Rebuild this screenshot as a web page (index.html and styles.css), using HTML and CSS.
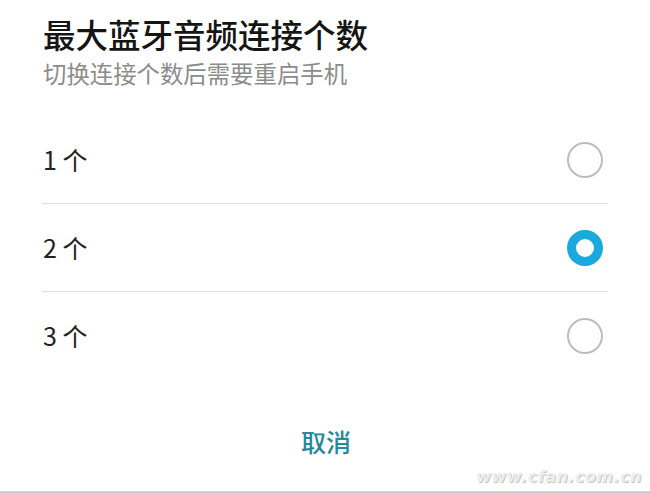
FILE: index.html
```html
<!DOCTYPE html>
<html lang="zh-CN">
<head>
<meta charset="utf-8">
<title>最大蓝牙音频连接个数</title>
<link rel="stylesheet" href="styles.css">
</head>
<body>
<div class="dialog">
  <div class="header">
    <div class="title">最大蓝牙音频连接个数</div>
    <div class="subtitle">切换连接个数后需要重启手机</div>
  </div>
  <div class="list">
    <div class="row"><span class="label">1 个</span><span class="radio"></span></div>
    <div class="row"><span class="label">2 个</span><span class="radio checked"></span></div>
    <div class="row"><span class="label">3 个</span><span class="radio"></span></div>
  </div>
  <div class="actions"><span class="cancel">取消</span></div>
</div>
<div class="watermark">www.cfan.com.cn</div>
<div class="bottom-bar"></div>
</body>
</html>
```
FILE: styles.css
```css
html, body {
  margin: 0;
  padding: 0;
  background: #ffffff;
}
body {
  width: 650px;
  height: 494px;
  position: relative;
  overflow: hidden;
  font-family: "Noto Sans CJK SC", "Noto Sans", sans-serif;
}
.dialog {
  padding: 0 42px;
}
.header {
  padding-top: 13px;
  padding-left: 1px;
}
.title {
  font-size: 32.5px;
  line-height: 42px;
  font-weight: 500;
  color: #151515;
}
.subtitle {
  margin-top: 4px;
  font-size: 23.4px;
  line-height: 28px;
  color: #8c8c8c;
}
.list {
  margin-top: 29px;
}
.row {
  height: 87px;
  display: flex;
  align-items: center;
  justify-content: space-between;
  padding: 0 5px 0 1px;
  border-bottom: 1px solid #dedede;
}
.row:last-child {
  border-bottom: none;
}
.label {
  font-size: 25px;
  color: #222222;
  line-height: 30px;
  margin-top: -2px;
}
.radio {
  width: 32px;
  height: 32px;
  border: 2px solid #bdbdbd;
  border-radius: 50%;
  box-sizing: content-box;
}
.radio.checked {
  width: 18px;
  height: 18px;
  border: 9px solid #1ba8dc;
}
.actions {
  margin-top: 42px;
  display: flex;
  justify-content: center;
}
.cancel {
  font-size: 25px;
  line-height: 40px;
  font-weight: 500;
  color: #24899b;
  margin-left: 2px;
}
.watermark {
  position: absolute;
  right: 8px;
  bottom: 8px;
  font-family: "DejaVu Sans", sans-serif;
  font-style: italic;
  font-weight: bold;
  font-size: 16px;
  letter-spacing: 0.5px;
  color: #ededed;
  text-shadow: 1px 1px 0 #c8c8c8;
}
.bottom-bar {
  position: absolute;
  left: 0;
  right: 0;
  bottom: 0;
  height: 3px;
  background: #cfcfcf;
}
```
